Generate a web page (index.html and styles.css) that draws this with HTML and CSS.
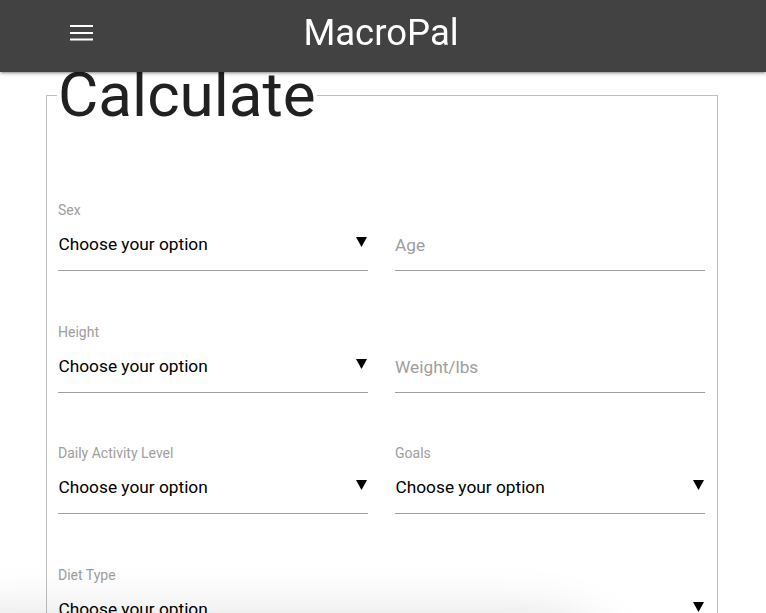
FILE: index.html
```html
<!DOCTYPE html>
<html>
<head>
<meta charset="utf-8">
<link rel="stylesheet" href="styles.css">
</head>
<body>
<header class="topbar">
  <div class="menu-btn">
    <svg width="24" height="16" viewBox="0 0 24 16"><rect x="0" y="0" width="23" height="2" fill="#fff"/><rect x="0" y="7" width="23" height="2" fill="#fff"/><rect x="0" y="13.5" width="23" height="2" fill="#fff"/></svg>
  </div>
  <div class="brand">MacroPal</div>
</header>
<main class="page">
  <fieldset class="calc">
    <legend class="calc-title">Calculate</legend>
    <div class="grid">
      <div class="field">
        <div class="label">Sex</div>
        <div class="control"><span class="value">Choose your option</span><svg class="caret" width="11" height="10" viewBox="0 0 11 10"><polygon points="0,0 11,0 5.5,10" fill="#000"/></svg></div>
      </div>
      <div class="field">
        <div class="label"></div>
        <div class="control"><span class="placeholder">Age</span></div>
      </div>
      <div class="field">
        <div class="label">Height</div>
        <div class="control"><span class="value">Choose your option</span><svg class="caret" width="11" height="10" viewBox="0 0 11 10"><polygon points="0,0 11,0 5.5,10" fill="#000"/></svg></div>
      </div>
      <div class="field">
        <div class="label"></div>
        <div class="control"><span class="placeholder">Weight/lbs</span></div>
      </div>
      <div class="field">
        <div class="label">Daily Activity Level</div>
        <div class="control"><span class="value">Choose your option</span><svg class="caret" width="11" height="10" viewBox="0 0 11 10"><polygon points="0,0 11,0 5.5,10" fill="#000"/></svg></div>
      </div>
      <div class="field">
        <div class="label">Goals</div>
        <div class="control"><span class="value">Choose your option</span><svg class="caret" width="11" height="10" viewBox="0 0 11 10"><polygon points="0,0 11,0 5.5,10" fill="#000"/></svg></div>
      </div>
      <div class="field full">
        <div class="label">Diet Type</div>
        <div class="control"><span class="value">Choose your option</span><svg class="caret" width="11" height="10" viewBox="0 0 11 10"><polygon points="0,0 11,0 5.5,10" fill="#000"/></svg></div>
      </div>
    </div>
  </fieldset>
</main>
<div class="bottom-shadow"></div>
</body>
</html>
```
FILE: styles.css
```css
html, body {
  margin: 0;
  padding: 0;
  background: #fff;
  font-family: Roboto, "Liberation Sans", sans-serif;
  overflow: hidden;
}
.topbar {
  position: fixed;
  top: 0;
  left: 0;
  right: 0;
  height: 72px;
  background: #424242;
  box-shadow: 0 2px 2px 0 rgba(0,0,0,.14), 0 3px 1px -2px rgba(0,0,0,.12), 0 1px 5px 0 rgba(0,0,0,.2);
  z-index: 10;
  display: flex;
  align-items: center;
  justify-content: center;
}
.menu-btn {
  position: absolute;
  left: 70px;
  top: 25px;
  width: 24px;
  height: 16px;
}
.menu-btn svg { display: block; }
.brand {
  color: #fff;
  font-size: 36.5px;
  line-height: 1;
  margin-top: -6px;
  margin-left: -4px;
}
.page {
  padding-top: 60px;
  height: 700px;
}
.calc {
  margin: 0 0 0 46px;
  width: 649px;
  border: 1px solid #c0c0c0;
  padding: 0 10px 0 11px;
}
.calc-title {
  font-size: 62px;
  line-height: 70px;
  color: #212121;
  padding: 0 1px;
  margin-left: -1px;
  font-weight: 400;
}
.grid {
  display: grid;
  grid-template-columns: 310px 310px;
  column-gap: 27px;
  padding-top: 72px;
}
.field {
  padding-bottom: 52.5px;
}
.field.full {
  grid-column: 1 / 3;
}
.label {
  height: 16px;
  line-height: 16px;
  font-size: 14px;
  color: #9e9e9e;
}
.control {
  height: 52px;
  border-bottom: 1px solid #9e9e9e;
  display: flex;
  align-items: center;
  justify-content: space-between;
  font-size: 17.3px;
}
.value {
  color: #000;
  padding-left: 0.5px;
}
.placeholder {
  color: #9e9e9e;
  padding-top: 2px;
}
.caret {
  display: block;
  margin-right: 1px;
  margin-top: -4px;
}
.bottom-shadow {
  position: fixed;
  left: -80px;
  top: 635px;
  width: 680px;
  height: 120px;
  border-radius: 70px;
  box-shadow: 0 0 55px 14px rgba(0,0,0,0.16);
  pointer-events: none;
  z-index: 5;
}
```
